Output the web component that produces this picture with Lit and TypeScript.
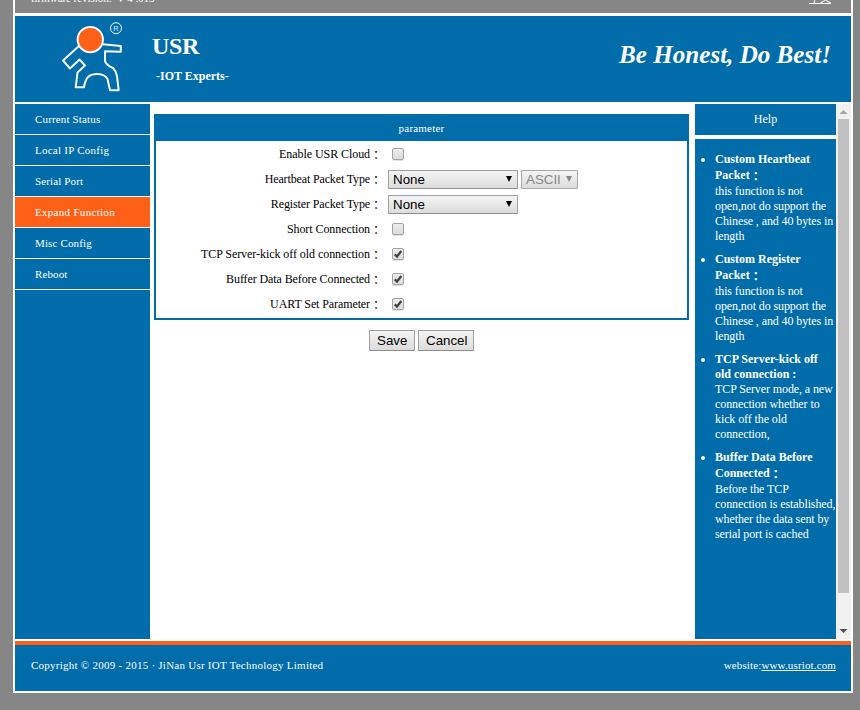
import { LitElement, html, css, svg, nothing } from "lit";
import { customElement } from "lit/decorators.js";
import { styleMap } from "lit/directives/style-map.js";

const menu = [
  { text: "Current Status", track: 0.15 },
  { text: "Local IP Config", track: 0.25 },
  { text: "Serial Port", track: 0.13 },
  { text: "Expand Function", track: 0.3, active: true },
  { text: "Misc Config", track: 0.14 },
  { text: "Reboot", track: 0.12 },
];

const help = [
  { title: ["Custom Heartbeat", "Packet"], wide: true, body: ["this function is not", "open,not do support the", "Chinese , and 40 bytes in", "length"] },
  { title: ["Custom Register", "Packet"], wide: true, body: ["this function is not", "open,not do support the", "Chinese , and 40 bytes in", "length"] },
  { title: ["TCP Server-kick off", "old connection :"], wide: false, body: ["TCP Server mode, a new", "connection whether to", "kick off the old", "connection,"] },
  { title: ["Buffer Data Before", "Connected"], wide: true, body: ["Before the TCP", "connection is established,", "whether the data sent by", "serial port is cached"] },
];

type Row = { label: string; track: number; kind: "check" | "select"; checked?: boolean; format?: boolean };
const rows: Row[] = [
  { label: "Enable USR Cloud", track: -0.07, kind: "check" },
  { label: "Heartbeat Packet Type", track: -0.14, kind: "select", format: true },
  { label: "Register Packet Type", track: -0.12, kind: "select" },
  { label: "Short Connection", track: -0.08, kind: "check" },
  { label: "TCP Server-kick off old connection", track: -0.06, kind: "check", checked: true },
  { label: "Buffer Data Before Connected", track: -0.1, kind: "check", checked: true },
  { label: "UART Set Parameter", track: -0.1, kind: "check", checked: true },
];

const tracking = (px: number) => styleMap({ letterSpacing: `${px}px` });

@customElement("app-root")
export class AppRoot extends LitElement {
  static styles = css`
    :host { display: block; height: 710px; overflow: hidden; background: #868686; color: #fff;
      font: 12px/15px "Liberation Serif", "Noto Sans CJK TC", serif; }
    * { box-sizing: border-box; }
    .page { width: 840px; height: 693px; margin-left: 13px; border: 2px solid #fff; border-top: 0; background: #fff;
      display: flex; flex-direction: column; }
    .top { height: 13px; flex: none; background: #868686; display: flex; align-items: flex-end; justify-content: space-between;
      padding: 0 20px 8px 16px; overflow: hidden; font-size: 11px; line-height: 13px; }
    .version { letter-spacing: -0.05px; white-space: pre; }
    .lang { text-decoration: underline; }
    .banner { flex: none; height: 86px; margin-top: 3px; background: #006ca9; display: flex; }
    .logo { width: 85px; height: 85px; margin: -1px 0 0 35px; flex: none; }
    .logo text { font-family: "Liberation Sans", sans-serif; }
    .brand { margin: 15px 0 0 17px; font-weight: bold; }
    .name { font-size: 24px; line-height: 30px; letter-spacing: -0.3px; }
    .tag { margin: 8px 0 0 4px; }
    .slogan { margin: 22px 20px 0 auto; font: italic bold 25.1px/34px "Liberation Serif", serif; }
    .main { height: 535px; margin-top: 2px; flex: none; display: flex; }
    .menu { width: 135px; background: #006ca9; font-size: 11px; }
    .item { height: 31px; line-height: 30px; padding-left: 20px; border-bottom: 1px solid #fff; }
    .on { background: #ff6017; }
    .content { width: 545px; padding: 10px 6px 0 4px; }
    .panel { border: 2px solid #006ca9; height: 206px; color: #000; }
    .head { height: 25px; line-height: 25px; background: #006ca9; color: #fff; text-align: center; font-size: 11px; letter-spacing: 0.2px; }
    .row { height: 25px; display: flex; align-items: center; }
    .label { width: 228px; height: 15px; margin-top: 2px; display: flex; justify-content: flex-end; white-space: nowrap; }
    .colon { width: 14px; height: 15px; margin-top: 2px; }
    .field { display: flex; padding-left: 4px; gap: 3px; }
    .check { width: 12px; height: 12px; margin-left: 4px; border: 1px solid #a3a3a3; border-radius: 2px;
      background: linear-gradient(#ededed, #dcdcdc); box-shadow: 0 1px 0 #e2e2e2; display: flex; }
    .check svg { width: 10px; height: 10px; }
    .select, .button { border: 1px solid #a0a0a0; border-bottom-color: #8d8d8d; border-radius: 1px; color: #000;
      background: linear-gradient(#f4f4f4, #dcdcdc); font: 13.33px/18px "Liberation Sans", sans-serif; }
    .select { width: 130px; height: 19px; margin-top: 2px; padding: 0 5px 0 4px; display: flex; justify-content: space-between; }
    .small { width: 57px; padding-right: 5px; color: #888; border-color: #a9a9a9; }
    .select svg { width: 6px; height: 6px; margin-top: 5px; fill: currentColor; }
    .actions { display: flex; justify-content: center; gap: 3px; margin-top: 10px; }
    .button { height: 21px; line-height: 19px; padding: 0 7px; text-align: center; }
    .save { width: 46px; }
    .cancel { width: 56px; }
    .side { width: 141px; display: flex; flex-direction: column; }
    .sidehead { height: 31px; line-height: 31px; background: #006ca9; text-align: center; }
    .help { flex: 1; margin: 4px 0 0; padding: 12px 0 0 20px; background: #006ca9; list-style: none; white-space: nowrap; letter-spacing: -0.1px; }
    .entry { position: relative; margin-bottom: 7px; padding-top: 1px; }
    .entry::before { content: ""; position: absolute; left: -14px; top: 7px; width: 4px; height: 4px; border-radius: 50%; background: #fff; }
    .line { height: 15px; display: flex; }
    .title { font-weight: bold; letter-spacing: 0; }
    .wide { padding-top: 0; }
    .wide .title { height: 33px; }
    .wide .title .line { height: 16px; line-height: 16px; }
    .bar { width: 15px; background: #f1f1f1; display: flex; flex-direction: column; justify-content: space-between; }
    .bar svg { width: 15px; height: 15px; }
    .thumb { width: 11px; height: 474px; margin: 0 2px auto; background: #c1c1c1; }
    .foot { margin-top: 2px; height: 50px; border-top: 4px solid #ff6017; background: #006ca9; flex: none; font-size: 11px;
      display: flex; justify-content: space-between; padding: 13px 15px 0 16px; }
    .copy { letter-spacing: 0.25px; }
    .web { letter-spacing: 0.14px; }
    .site { text-decoration: underline; }
  `;

  private caret() {
    return html`<svg viewBox="0 0 6 6"><path d="M0 0h6L3 6z" /></svg>`;
  }

  private tick() {
    return svg`<svg viewBox="0 0 10 10"><path d="M1.8 5.4 4 7.5 8.3 2" fill="none" stroke="#404040" stroke-width="2.2" /></svg>`;
  }

  private field(r: Row) {
    if (r.kind === "check") return html`<span class="check">${r.checked ? this.tick() : nothing}</span>`;
    return html`<span class="select">None${this.caret()}</span>
      ${r.format ? html`<span class="select small">ASCII${this.caret()}</span>` : nothing}`;
  }

  render() {
    return html`<div class="page">
      <div class="top"><span class="version">firmware revision:  V 4 .013</span><span class="lang">中文</span></div>
      <div class="banner">
        <svg class="logo" viewBox="0 0 85 85" fill="none" stroke="#f4fbff" stroke-width="2" stroke-linejoin="round">
          <path d="M29 31 13 45.5 20 53.5 29.5 44.5 35 50.5 27.5 57.5 25.7 72.3H34Q35 65 38.5 61.5Q42 58.7 48 59Q55 59.5 57.5 64L60 75.3H68.7L67 61Q66 56 63 53Q56 50 55 46V36.2L70.8 36.7V31L53 29.3" />
          <circle cx="40.3" cy="24.6" r="12.7" fill="#ff6017" />
          <circle cx="66" cy="13.2" r="5.5" stroke-width="1" />
          <text x="66" y="15.9" text-anchor="middle" font-size="7.5" fill="#d8edf8" stroke="none">R</text>
        </svg>
        <div class="brand"><div class="name">USR</div><div class="tag">-IOT Experts-</div></div>
        <div class="slogan">Be Honest, Do Best!</div>
      </div>
      <div class="main">
        <div class="menu">${menu.map((m) => html`<div class="item ${m.active ? "on" : ""}" style=${tracking(m.track)}>${m.text}</div>`)}</div>
        <div class="content">
          <div class="panel">
            <div class="head">parameter</div>
            ${rows.map((r) => html`<div class="row"><span class="label" style=${tracking(r.track)}>${r.label}<span class="colon">：</span></span><span class="field">${this.field(r)}</span></div>`)}
          </div>
          <div class="actions"><span class="button save">Save</span><span class="button cancel">Cancel</span></div>
        </div>
        <div class="side">
          <div class="sidehead">Help</div>
          <ul class="help">
            ${help.map((h) => html`<li class="entry ${h.wide ? "wide" : ""}">
              <div class="title">${h.title.map((t, i) => html`<div class="line">${t}${h.wide && i === 1 ? html`<span class="colon">：</span>` : nothing}</div>`)}</div>
              ${h.body.map((t) => html`<div class="line">${t}</div>`)}
            </li>`)}
          </ul>
        </div>
        <div class="bar">
          <svg viewBox="0 0 15 15"><path d="M3.5 10h8L7.5 6z" fill="#a3a3a3" /></svg>
          <div class="thumb"></div>
          <svg viewBox="0 0 15 15"><path d="M3.5 5h8L7.5 9z" fill="#505050" /></svg>
        </div>
      </div>
      <div class="foot"><span class="copy">Copyright © 2009 - 2015 · JiNan Usr IOT Technology Limited</span><span class="web">website:<span class="site">www.usriot.com</span></span></div>
    </div>`;
  }
}
